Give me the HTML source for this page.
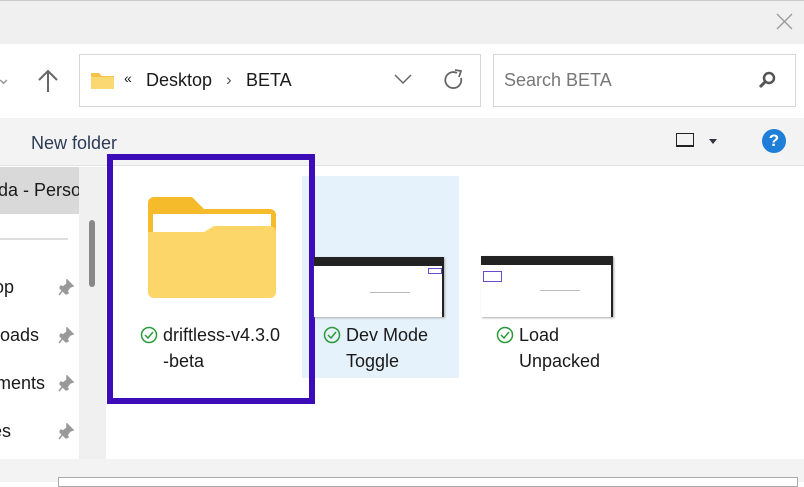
<!DOCTYPE html>
<html><head><meta charset="utf-8"><style>
*{margin:0;padding:0;box-sizing:border-box}
body{width:804px;height:482px;overflow:hidden;background:#fff;font-family:"Liberation Sans",sans-serif;position:relative;color:#1a1a1a}
.a{position:absolute}
.t{font-size:17px;white-space:nowrap}
</style></head><body>
<div class="a" style="left:0;top:0;width:804px;height:44px;background:#f0f0f0;border-top:1px solid #c8c8c8"></div>
<svg class="a" style="left:776px;top:13px" width="17" height="17"><path d="M1 1L16 16M16 1L1 16" stroke="#999" stroke-width="1.3"/></svg>
<div class="a" style="left:0;top:44px;width:804px;height:74px;background:#fff"></div>
<div class="a t" style="left:-4px;top:68px;color:#999;font-size:18px">⌄</div>
<svg class="a" style="left:36px;top:68px" width="24" height="26"><path d="M12 3V24M3 12L12 3L21 12" stroke="#666" stroke-width="2" fill="none"/></svg>
<div class="a" style="left:79px;top:54px;width:402px;height:53px;border:1px solid #d6d6d6"></div>
<svg class="a" style="left:91px;top:71px" width="24" height="18"><path d="M0 2h8l3 3h12v13H0z" fill="#f7c34b"/><rect x="0" y="6" width="23" height="12" fill="#fcd873"/></svg>
<div class="a t" style="left:124px;top:70px;font-size:14px">«</div>
<div class="a t" style="left:146px;top:70px;font-size:18px">Desktop</div>
<div class="a t" style="left:226px;top:70px;color:#555">›</div>
<div class="a t" style="left:246px;top:70px;font-size:18px">BETA</div>
<svg class="a" style="left:393px;top:72px" width="20" height="14"><path d="M2 3L10 11L18 3" stroke="#666" stroke-width="1.5" fill="none"/></svg>
<svg class="a" style="left:442px;top:68px" width="24" height="24"><path d="M19 10A8 8 0 1 1 15 5" stroke="#666" stroke-width="1.8" fill="none"/><path d="M13 2L19 3L17 9" stroke="#666" stroke-width="1.8" fill="none"/></svg>
<div class="a" style="left:493px;top:54px;width:303px;height:53px;border:1px solid #d6d6d6"></div>
<div class="a t" style="left:504px;top:70px;color:#777;font-size:18px">Search BETA</div>
<svg class="a" style="left:758px;top:71px" width="18" height="18"><circle cx="11" cy="7" r="5" stroke="#555" stroke-width="2.5" fill="none"/><path d="M7 11L2 16" stroke="#555" stroke-width="3"/></svg>
<div class="a" style="left:0;top:118px;width:804px;height:48px;background:#f3f3f3;border-bottom:1px solid #e2e2e2"></div>
<div class="a t" style="left:31px;top:133px;color:#2b3a55;font-size:18px">New folder</div>
<div class="a" style="left:676px;top:133px;width:18px;height:14px;border:1px solid #222;border-bottom:2px solid #222"></div>
<div class="a" style="left:709px;top:139px;border:4px solid transparent;border-top:5px solid #334;width:0;height:0"></div>
<div class="a" style="left:762px;top:129px;width:24px;height:24px;border-radius:50%;background:#1e7ed8;color:#fff;font-size:17px;text-align:center;line-height:24px;font-weight:bold">?</div>
<!-- sidebar -->
<div class="a" style="left:0;top:167px;width:79px;height:47px;background:#d9d9d9"></div>
<div class="a t" style="left:-2px;top:180px;font-size:18px">da - Perso</div>
<div class="a" style="left:0;top:238px;width:68px;height:2px;background:#ddd"></div>
<div class="a" style="left:79px;top:167px;width:27px;height:292px;background:#f0f0f0"></div>
<div class="a" style="left:89px;top:220px;width:6px;height:67px;background:#888;border-radius:3px"></div>
<div class="a t" style="left:-6px;top:277px;font-size:18px">op</div>
<div class="a t" style="left:-4px;top:325px;font-size:18px">loads</div>
<div class="a t" style="left:-4px;top:373px;font-size:18px">ments</div>
<div class="a t" style="left:-8px;top:421px;font-size:18px">es</div>
<svg class="a" style="left:58px;top:279px" width="16" height="18"><path d="M9 1l6 6-3 1-3 4 1 2-2 1-6-6 1-2 2 1 4-3z M5 11l-4 5" fill="#999" stroke="#999" stroke-width="1.5"/></svg>
<svg class="a" style="left:58px;top:327px" width="16" height="18"><path d="M9 1l6 6-3 1-3 4 1 2-2 1-6-6 1-2 2 1 4-3z M5 11l-4 5" fill="#999" stroke="#999" stroke-width="1.5"/></svg>
<svg class="a" style="left:58px;top:375px" width="16" height="18"><path d="M9 1l6 6-3 1-3 4 1 2-2 1-6-6 1-2 2 1 4-3z M5 11l-4 5" fill="#999" stroke="#999" stroke-width="1.5"/></svg>
<svg class="a" style="left:58px;top:423px" width="16" height="18"><path d="M9 1l6 6-3 1-3 4 1 2-2 1-6-6 1-2 2 1 4-3z M5 11l-4 5" fill="#999" stroke="#999" stroke-width="1.5"/></svg>
<!-- items -->
<div class="a" style="left:302px;top:176px;width:157px;height:202px;background:#e5f1fb"></div>
<div class="a" style="left:107px;top:154px;width:208px;height:250px;border:6px solid #3b0cb8"></div>
<svg class="a" style="left:148px;top:197px" width="128" height="101"><path d="M6 0h38l12 12h66a6 6 0 0 1 6 6v77H0V6a6 6 0 0 1 6-6z" fill="#f5bb2b"/><rect x="5" y="17" width="118" height="50" fill="#fff"/><path d="M0 35h56l10-6h56a6 6 0 0 1 6 6v60a6 6 0 0 1-6 6H6a6 6 0 0 1-6-6z" fill="#fcd669"/></svg>
<svg class="a" style="left:140px;top:326px" width="18" height="18"><circle cx="9" cy="9" r="7.5" stroke="#2a9a3a" stroke-width="1.5" fill="none"/><path d="M5 9l3 3 5-6" stroke="#2a9a3a" stroke-width="1.5" fill="none"/></svg>
<div class="a t" style="left:163px;top:325px;font-size:18px">driftless-v4.3.0</div>
<div class="a t" style="left:163px;top:351px;font-size:18px">-beta</div>
<div class="a" style="left:314px;top:257px;width:130px;height:60px;background:#fff;border-top:9px solid #222;border-right:2px solid #222;box-shadow:1px 1px 2px #aaa"></div>
<div class="a" style="left:428px;top:268px;width:14px;height:6px;border:1px solid #6a4ac8"></div>
<div class="a" style="left:370px;top:292px;width:40px;height:1px;background:#bbb"></div>
<div class="a" style="left:481px;top:256px;width:132px;height:61px;background:#fff;border-top:9px solid #222;border-right:2px solid #222;box-shadow:1px 1px 2px #aaa"></div>
<div class="a" style="left:483px;top:271px;width:19px;height:11px;border:1px solid #6a4ac8"></div>
<div class="a" style="left:540px;top:290px;width:40px;height:1px;background:#bbb"></div>
<svg class="a" style="left:323px;top:326px" width="18" height="18"><circle cx="9" cy="9" r="7.5" stroke="#2a9a3a" stroke-width="1.5" fill="none"/><path d="M5 9l3 3 5-6" stroke="#2a9a3a" stroke-width="1.5" fill="none"/></svg>
<div class="a t" style="left:346px;top:325px;font-size:18px">Dev Mode</div>
<div class="a t" style="left:346px;top:351px;font-size:18px">Toggle</div>
<svg class="a" style="left:496px;top:326px" width="18" height="18"><circle cx="9" cy="9" r="7.5" stroke="#2a9a3a" stroke-width="1.5" fill="none"/><path d="M5 9l3 3 5-6" stroke="#2a9a3a" stroke-width="1.5" fill="none"/></svg>
<div class="a t" style="left:519px;top:325px;font-size:18px">Load</div>
<div class="a t" style="left:519px;top:351px;font-size:18px">Unpacked</div>
<!-- bottom -->
<div class="a" style="left:0;top:459px;width:804px;height:23px;background:#f3f3f3"></div>
<div class="a" style="left:58px;top:477px;width:740px;height:10px;background:#fff;border:1px solid #aaa"></div>
</body></html>
